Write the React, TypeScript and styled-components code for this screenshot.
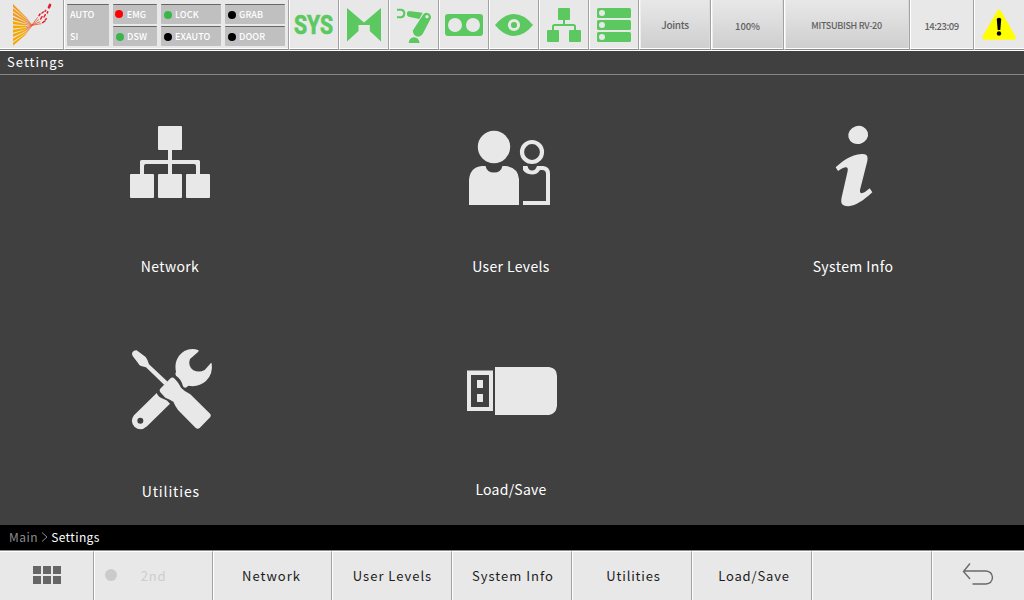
import React from 'react';
import styled, { createGlobalStyle, css } from 'styled-components';

const GREEN = '#5bc95f';
const LIGHT = '#e8e8e8';

const GlobalStyle = createGlobalStyle`
  body {
    margin: 0;
    font-family: 'Noto Sans CJK SC', 'Open Sans', sans-serif;
  }
  * { box-sizing: border-box; }
  svg { display: block; }
`;

const Screen = styled.div`
  width: 1024px;
  height: 600px;
  display: flex;
  flex-direction: column;
  background: #404040;
  overflow: hidden;
`;

const TopBar = styled.header`
  height: 51px;
  flex: none;
  display: flex;
  background: ${LIGHT};
  border-bottom: 1px solid #fff;
`;

const TopCell = styled.div<{ $w: number; $raised?: boolean; $shift?: number }>`
  width: ${p => p.$w}px;
  flex: none;
  display: flex;
  align-items: center;
  justify-content: center;
  height: 50px;
  padding-right: ${p => p.$shift ?? 0}px;
  border-left: 1px solid #fff;
  border-right: 1px solid #a2a2a2;
  border-bottom: 1px solid #8a8a8a;
  box-shadow: inset 0 -1px 0 #fff;
  &:first-child { border-left: 0; justify-content: flex-start; }
  &:last-child { border-right: 0; }
  ${p => p.$raised && css`
    background: linear-gradient(#e8e8e8, #cecece);
    box-shadow: inset 0 -1px 0 #fff, inset 1px 0 0 #ededed, inset -1px 0 0 #dadada;
  `}
`;

const CellText = styled.span<{ $ls: number; $size?: number; $dy?: number }>`
  font-size: ${p => p.$size ?? 10}px;
  font-weight: 500;
  line-height: 14px;
  letter-spacing: ${p => p.$ls}px;
  color: #606060;
  white-space: nowrap;
  padding-top: ${p => p.$dy ?? 2}px;
`;

const Signals = styled.div`
  width: 100%;
  height: 49px;
  padding: 4px 0 0 2px;
  display: grid;
  grid-template-columns: 42px 44px 60px 60px;
  grid-template-rows: 20px 20px;
  gap: 2px 4px;
`;

const Signal = styled.div<{ $tall?: boolean; $indent?: number }>`
  grid-row: ${p => (p.$tall ? 'span 2' : 'auto')};
  display: flex;
  flex-direction: ${p => (p.$tall ? 'column' : 'row')};
  align-items: ${p => (p.$tall ? 'flex-start' : 'center')};
  gap: ${p => (p.$tall ? '8px' : '3px')};
  padding: ${p => (p.$tall ? '3px 0 0 3px' : `0 0 0 ${p.$indent ?? 3}px`)};
  background: #c0c0c0;
  border-top: 1px solid #666;
  border-radius: 1px;
  color: #fff;
  font-size: 9px;
  font-weight: 500;
  line-height: 14px;
  letter-spacing: 0.1px;
`;

const Dot = styled.i<{ $c: string; $lift?: boolean }>`
  width: 8px;
  height: 8px;
  border-radius: 50%;
  margin-bottom: ${p => (p.$lift ? 2 : 0)}px;
  background: ${p => p.$c};
`;

const SysMark = styled.span`
  font: 700 25.5px/30px Roboto, sans-serif;
  color: ${GREEN};
  -webkit-text-stroke: 0.7px ${GREEN};
  transform: scaleX(0.83);
`;

const TitleBar = styled.h1`
  margin: 0;
  height: 24px;
  flex: none;
  padding-left: 7px;
  border-bottom: 1px solid #858585;
  color: #fff;
  font-size: 13px;
  font-weight: 400;
  line-height: 22px;
  letter-spacing: 1.05px;
`;

const Tiles = styled.main`
  height: 450px;
  flex: none;
  display: grid;
  grid-template-columns: 340px 342px 342px;
  grid-template-rows: 225px 225px;
`;

const Tile = styled.div`
  display: flex;
  flex-direction: column;
  align-items: center;
  padding-top: 35px;
`;

const TileLabel = styled.span<{ $ls: number; $top?: number }>`
  margin-top: ${p => p.$top ?? 26}px;
  font-size: 14px;
  line-height: 20px;
  letter-spacing: ${p => p.$ls}px;
  color: #fff;
`;

const Crumbs = styled.nav`
  height: 25px;
  flex: none;
  display: flex;
  align-items: center;
  padding: 0 0 1px 9px;
  background: #000;
  font-size: 12px;
  line-height: 24px;
`;

const Crumb = styled.span<{ $active?: boolean }>`
  color: ${p => (p.$active ? '#fff' : '#8c8c8c')};
  letter-spacing: ${p => (p.$active ? 0.4 : 0.5)}px;
`;

const BottomBar = styled.footer`
  height: 50px;
  flex: none;
  display: flex;
  border-top: 1px solid #8a8a8a;
  background: ${LIGHT};
`;

const Key = styled.button<{ $w: number; $dim?: boolean; $left?: number; $right?: number; $ls?: number; $up?: number }>`
  width: ${p => p.$w}px;
  flex: none;
  display: flex;
  align-items: center;
  justify-content: center;
  border: 0;
  border-right: 1px solid #a2a2a2;
  border-left: 1px solid #fff;
  border-top: 1px solid #fff;
  background: none;
  padding: 0 ${p => p.$right ?? 0}px ${p => p.$up ?? 2}px ${p => p.$left ?? 0}px;
  font-family: inherit;
  font-size: 13px;
  letter-spacing: ${p => p.$ls ?? 1}px;
  color: ${p => (p.$dim ? '#cdcdcd' : '#1c1c1c')};
  &:first-child { border-left: 0; }
  &:last-child { border-right: 0; }
`;

const KeyLamp = styled.i`
  width: 12px;
  height: 12px;
  border-radius: 50%;
  background: #cbcbcb;
  margin-right: 24px;
`;

const RAYS = Array.from({ length: 10 }, (_, i) => i);

const Logo = () => (
  <svg width="63" height="49" viewBox="0 0 189 147">
    {RAYS.map(i => {
      const y = 12 + i * 12.9;
      const iy = 51 + i * 5.4;
      return (
        <g key={i}>
          <polygon points={`39,${y} 39,${y + 9} 78,${iy + 4} 78,${iy}`} fill={i < 4 ? '#f39a1c' : '#f7a800'} />
          <polygon points={`78,${iy} 78,${iy + 2.6} 97,77 97,75.5`} fill="#e9692c" />
        </g>
      );
    })}
    <g stroke="#e5532d" strokeWidth="2.400" fill="none">
      <path d="M95 76L113 52M95 76L117 58M95 76L121 65M95 76L124 71" />
    </g>
    <g stroke="#e02030" strokeLinecap="round" fill="none">
      <path strokeWidth="4.500" d="M117 47L120 42M122 57L126 50M128 68L135 63M126 39L130 36M132 51L136 44" />
      <path strokeWidth="4.500" d="M136 59L139 56M135 34L137 31M142 39L143 35" />
      <path strokeWidth="8" d="M147 22L150 15" />
    </g>
  </svg>
);

const GateIcon = () => (
  <svg width="36" height="36" viewBox="0 0 36 36" fill={GREEN}>
    <path d="M1 1L18 15.500L35 1V34.500L23.800 24V18H12.500V24L1 34.500Z" />
  </svg>
);

const RobotIcon = () => (
  <svg width="48" height="48" viewBox="300 0 144 144">
    <path d="M321 26H334Q343 28 343 37Q343 48 334 49H321" fill="none" stroke={GREEN} strokeWidth="6" />
    <path d="M351 34L357 30L398 35L388 54L356 47L351 43Z" fill={GREEN} />
    <path d="M399 41Q404 34 413 36Q424 40 423 51L398 99Q390 110 379 106Q368 101 369 88Z" fill={GREEN} />
    <circle cx="411" cy="47" r="5" fill={LIGHT} />
    <path d="M356 126Q358 110 372 109Q386 110 389 126Z" fill={GREEN} />
  </svg>
);

const ReelsIcon = () => (
  <svg width="38" height="22" viewBox="0 0 38 22">
    <rect width="38" height="22" rx="3" fill={GREEN} />
    <circle cx="10" cy="11" r="7" fill={LIGHT} />
    <circle cx="28" cy="11" r="7" fill={LIGHT} />
  </svg>
);

const EyeIcon = () => (
  <svg width="38" height="22" viewBox="0 0 38 22">
    <path d="M0 11Q9 0 19 0T38 11Q29 22 19 22T0 11Z" fill={GREEN} />
    <circle cx="19" cy="11" r="4.600" fill="none" stroke={LIGHT} strokeWidth="3" />
  </svg>
);

const TreeIcon = () => (
  <svg width="34" height="34" viewBox="0 0 34 34" fill={GREEN}>
    <rect x="11" width="12" height="12" rx="1" />
    <rect y="22" width="12" height="12" rx="1" />
    <rect x="22" y="22" width="12" height="12" rx="1" />
    <path d="M17 12V17M6 22V18.500Q6 17 7.500 17H26.500Q28 17 28 18.500V22" fill="none" stroke={GREEN} strokeWidth="2" />
  </svg>
);

const RackIcon = () => (
  <svg width="34" height="34" viewBox="0 0 34 34">
    {[0, 12, 24].map(y => (
      <g key={y}>
        <rect y={y} width="34" height="10" rx="1.500" fill={GREEN} />
        <circle cx="5" cy={y + 5} r="3" fill={LIGHT} />
      </g>
    ))}
  </svg>
);

const WarningIcon = () => (
  <svg width="36" height="32" viewBox="0 0 36 32">
    <path d="M18 3L32.500 28.500H3.500Z" fill="#ff0" stroke="#ff0" strokeWidth="4.500" strokeLinejoin="round" />
    <path d="M15.800 10.500Q15.800 8.800 18 8.800T20.200 10.500L19.300 21H16.700Z" fill="#000" />
    <circle cx="18" cy="24.500" r="2.200" fill="#000" />
  </svg>
);

const TileSvg = styled.svg`
  width: 120px;
  height: 120px;
  flex: none;
  fill: ${LIGHT};
`;

const NetworkIcon = () => (
  <TileSvg viewBox="0 0 120 120">
    <rect x="48" y="16" width="24" height="24" rx="1" />
    {[20, 48, 76].map(x => <rect key={x} x={x} y="64" width="24" height="24" rx="1" />)}
    <path d="M58 40H62V50H88.500Q90 50 90 51.500V64H86V56Q86 54 84 54H62V64H58V54H36Q34 54 34 56V64H30V51.500Q30 50 31.500 50H58Z" />
  </TileSvg>
);

const UsersIcon = () => (
  <TileSvg viewBox="1 0 120 120">
    <circle cx="44" cy="37" r="16.200" />
    <path d="M19 95V70Q20 57 32 56H35.500Q37 62.600 44 62.600T52.500 56H55Q68 57 69 69V95Z" />
    <circle cx="82" cy="42" r="10" fill="none" stroke={LIGHT} strokeWidth="4.200" />
    <path d="M73 56H77.500Q78.500 60.500 82 60.500T87 56H93Q100 56.500 100 64V95H73V91H96V64Q96 60 92 60H90Q87.500 64.500 82 64.500Q75.500 64 73 60Z" />
  </TileSvg>
);

const InfoIcon = () => (
  <TileSvg viewBox="-21 0 360 360">
    <ellipse cx="174.500" cy="75" rx="30" ry="27" transform="rotate(-15 174 75)" />
    <path d="M107 172C125 155 152 134 185 132C203 131 204 140 202 153L180 240C179 255 190 252 209 235L217 247C190 272 168 287 145 289C123 289 122 278 125 262L143 183C146 165 131 172 114 183Z" />
  </TileSvg>
);

const ToolsIcon = () => (
  <TileSvg viewBox="0 0 360 360">
    <path d="M66 57Q67 46 80 46L107 66Q112 72 117 88L173 140L163 150L108 97L93 93Q88 92 84 84L68 63Z" />
    <path d="M180 131Q187 124 194 131L202 140Q208 147 213 158Q222 168 241 178L301 237Q304 241 301 246L269 279Q264 283 258 280L204 225Q196 214 190 200Q178 192 166 188L151 172Q147 167 150 162Z" />
    <path fillRule="evenodd" d="M140 174Q145 187 161 192Q171 194 180 206L111 274Q92 291 74 276Q58 259 72 241ZM91 248A9 9 0 1 0 91 266A9 9 0 1 0 91 248Z" />
    <path d="M266 46Q245 37 223 48Q190 70 198 111Q194 116 198 122Q214 132 219 154Q222 160 230 157L235 152Q265 158 288 138Q310 117 305 84L302 85L284 105Q268 114 250 106Q232 92 240 72L265 50Z" />
  </TileSvg>
);

const UsbIcon = () => (
  <TileSvg viewBox="451 335 120 120">
    <path fillRule="evenodd" d="M467 370.500H493V411H467ZM471 375V407H489V375Z" />
    <rect x="477" y="380" width="6" height="8" />
    <rect x="477" y="394" width="6" height="8" />
    <path d="M495 367H549Q557 368 557 376V406Q556 414 549 415H495Z" />
  </TileSvg>
);

const MenuIcon = () => (
  <svg width="28" height="18" viewBox="0 0 28 18" fill="#666">
    {[0, 10, 20].map(x => [0, 10].map(y => <rect key={`${x}-${y}`} x={x} y={y} width="8" height="8" />))}
  </svg>
);

const BackIcon = () => (
  <svg width="32" height="24" viewBox="0 0 32 24" fill="none" stroke="#6a6a6a" strokeWidth="1.400">
    <path d="M8 1.500L1.500 9.500L8 17M1.500 9H24Q30 9.500 30.500 15.500Q30 21.500 24 22H10.500" />
  </svg>
);

const Chevron = styled.svg`
  margin: 0 3px 0 3px;
`;

export default function App() {
  return (
    <Screen>
      <GlobalStyle />
      <TopBar>
        <TopCell $w={64}><Logo /></TopCell>
        <TopCell $w={225}>
          <Signals>
            <Signal $tall><span>AUTO</span><span>SI</span></Signal>
            <Signal $indent={2}><Dot $c="#f00" $lift /><span>&#8202;EMG</span></Signal>
            <Signal><Dot $c="#39b54a" />LOCK</Signal>
            <Signal><Dot $c="#000" />GRAB</Signal>
            <Signal><Dot $c="#39b54a" />DSW</Signal>
            <Signal><Dot $c="#000" />EXAUTO</Signal>
            <Signal><Dot $c="#000" />DOOR</Signal>
          </Signals>
        </TopCell>
        <TopCell $w={50} $shift={1}><SysMark>SYS</SysMark></TopCell>
        <TopCell $w={50}><GateIcon /></TopCell>
        <TopCell $w={50}><RobotIcon /></TopCell>
        <TopCell $w={50}><ReelsIcon /></TopCell>
        <TopCell $w={50}><EyeIcon /></TopCell>
        <TopCell $w={50}><TreeIcon /></TopCell>
        <TopCell $w={50}><RackIcon /></TopCell>
        <TopCell $w={72} $raised><CellText $ls={-0.3} $dy={0}>Joints</CellText></TopCell>
        <TopCell $w={73} $raised><CellText $ls={-0.1} $size={9.5}>100%</CellText></TopCell>
        <TopCell $w={126} $raised $shift={1}><CellText $ls={-0.3} $size={9}>MITSUBISH RV-20</CellText></TopCell>
        <TopCell $w={64} $shift={1}><CellText $ls={-0.5} $size={9.5}>14:23:09</CellText></TopCell>
        <TopCell $w={50} $shift={2}><WarningIcon /></TopCell>
      </TopBar>
      <TitleBar>Settings</TitleBar>
      <Tiles>
        <Tile><NetworkIcon /><TileLabel $ls={0.35}>Network</TileLabel></Tile>
        <Tile><UsersIcon /><TileLabel $ls={0.35}>User Levels</TileLabel></Tile>
        <Tile><InfoIcon /><TileLabel $ls={0.4}>System Info</TileLabel></Tile>
        <Tile><ToolsIcon /><TileLabel $ls={0.85}>&#8202;Utilities</TileLabel></Tile>
        <Tile><UsbIcon /><TileLabel $ls={0.25} $top={24}>Load/Save</TileLabel></Tile>
      </Tiles>
      <Crumbs>
        <Crumb>Main</Crumb>
        <Chevron width="7" height="10" viewBox="0 0 7 10" fill="none" stroke="#8c8c8c"><path d="M1 0.500L6 5L1 9.500" /></Chevron>
        <Crumb $active>Settings</Crumb>
      </Crumbs>
      <BottomBar>
        <Key $w={94}><MenuIcon /></Key>
        <Key $w={119} $dim $right={36} $ls={0.8}><KeyLamp />2nd</Key>
        <Key $w={119} $right={2}>Network</Key>
        <Key $w={120} $left={1}>User Levels</Key>
        <Key $w={120} $left={2}>System Info</Key>
        <Key $w={120} $left={3} $ls={0.85}>Utilities</Key>
        <Key $w={120} $left={4} $ls={0.85}>Load/Save</Key>
        <Key $w={120} />
        <Key $w={92} $right={2} $up={5}><BackIcon /></Key>
      </BottomBar>
    </Screen>
  );
}
